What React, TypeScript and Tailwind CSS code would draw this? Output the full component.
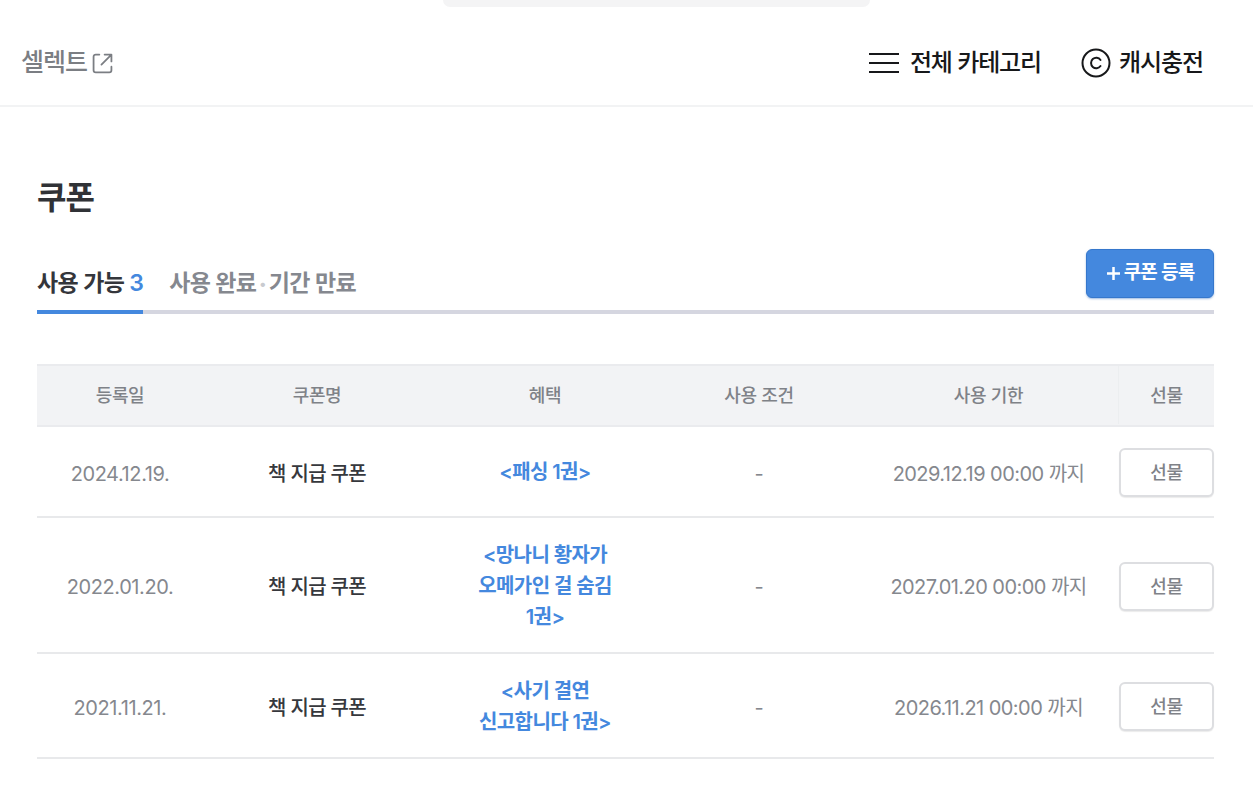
const rows = [
  { date: "2024.12.19.", title: ["<패싱 1권>"], until: "2029.12.19 00:00 까지", h: "h-[91px]" },
  { date: "2022.01.20.", title: ["<망나니 황자가", "오메가인 걸 숨김", "1권>"], until: "2027.01.20 00:00 까지", h: "h-[136px]" },
  { date: "2021.11.21.", title: ["<사기 결연", "신고합니다 1권>"], until: "2026.11.21 00:00 까지", h: "h-[105px]" },
];
const cols = "grid grid-cols-[166px_228px_228px_200px_259px_96px]";

export default function App() {
  return (
    <div className="min-h-[812px] bg-white font-['Inter','Noto_Sans_CJK_KR',sans-serif] overflow-hidden">
      <div className="flex h-[7px] pl-[443px]">
        <div className="w-[427px] h-[7px] bg-[#f4f4f5] rounded-b-[12px]" />
      </div>
      <header className="h-[100px] border-b-2 border-[#f2f3f4] flex items-center justify-between pl-[21px] pr-[50px] pt-[14px]">
        <div className="flex items-center gap-[5px] text-[#7b7e83]">
          <span className="text-[25px] font-medium tracking-[-1px]">셀렉트</span>
          <svg width="21" height="21" viewBox="0 0 20 20" fill="none" stroke="currentColor" strokeWidth="1.700" strokeLinecap="round" strokeLinejoin="round">
            <path d="M7 1.500H3.500a2 2 0 0 0-2 2v13a2 2 0 0 0 2 2h13a2 2 0 0 0 2-2V13" />
            <path d="M12 1.500h6.500V8M18.500 1.500 9 11" />
          </svg>
        </div>
        <div className="flex items-center text-[#17181a]">
          <svg width="30" height="22" viewBox="0 0 30 22" stroke="currentColor" strokeWidth="2.200" className="mr-[11px]">
            <path d="M0 2h30M0 11h30M0 20h30" />
          </svg>
          <span className="text-[24px] font-medium tracking-[-1.1px] mr-[40px]">전체 카테고리</span>
          <svg width="30" height="30" viewBox="0 0 30 30" fill="none" stroke="currentColor" className="mr-[8px]">
            <circle cx="15" cy="15" r="13.500" strokeWidth="2" />
            <path d="M19.500 12a5.200 5.200 0 1 0 0 6" strokeWidth="2" strokeLinecap="round" />
          </svg>
          <span className="text-[24px] font-medium tracking-[-1.1px]">캐시충전</span>
        </div>
      </header>

      <main className="pl-[37px] pr-[39px]">
        <h1 className="mt-[68px] text-[32px] leading-[46px] font-bold text-[#303236] tracking-[-0.9px]">쿠폰</h1>

        <div className="mt-[28px] flex items-end justify-between h-[65px] border-b-[4px] border-[#d5d6e0] relative">
          <div className="flex items-start gap-[26px] text-[23px] font-semibold tracking-[-0.65px] h-[65px] -mb-[4px]">
            <div className="h-[65px] border-b-[4px] border-[#4488de] flex items-center pt-[8px] whitespace-nowrap">
              <span className="text-[#34363b]">사용 가능</span>
              <span className="text-[#4488de] ml-[5px]">3</span>
            </div>
            <div className="h-[61px] flex items-center pt-[8px] text-[#85888f] whitespace-nowrap">
              <span>사용 완료</span>
              <span className="text-[#c9cbd0] text-[14px] mx-[3px]">•</span>
              <span>기간 만료</span>
            </div>
          </div>
          <button className="absolute right-0 top-0 w-[128px] h-[49px] rounded-[6px] bg-[#4488de] border border-[#3577cc] shadow-[0_1px_2px_rgba(60,120,200,0.5)] flex items-center justify-center gap-[3px] text-white text-[19px] font-semibold tracking-[-0.8px]">
            <svg width="15" height="15" viewBox="0 0 15 15" stroke="currentColor" strokeWidth="2.500">
              <path d="M7.500 1v13M1 7.500h13" />
            </svg>
            쿠폰 등록
          </button>
        </div>

        <div className="mt-[50px] w-[1177px]">
          <div className={`${cols} h-[63px] pb-[1px] bg-[#f2f3f5] border-y-2 border-[#eaebee] items-center text-center text-[18px] font-medium text-[#7f8288] tracking-[-0.35px]`}>
            <div>등록일</div>
            <div>쿠폰명</div>
            <div>혜택</div>
            <div>사용 조건</div>
            <div>사용 기한</div>
            <div className="h-full flex items-center justify-center border-l border-[#eceef0]">선물</div>
          </div>
          {rows.map((r) => (
            <div key={r.date} className={`${cols} ${r.h} pt-[2px] border-b-2 border-[#e8e9eb] items-center text-center`}>
              <div className="pt-[2px] text-[20px] text-[#85888e] tracking-[-0.4px]">{r.date}</div>
              <div className="pt-[2px] text-[20px] font-medium text-[#36383d] tracking-[-0.7px]">책 지급 쿠폰</div>
              <div className="text-[20px] leading-[31px] font-semibold text-[#4488de] tracking-[-0.6px]">
                {r.title.map((t) => (
                  <div key={t}>{t}</div>
                ))}
              </div>
              <div className="pt-[2px] text-[20px] text-[#85888e]">-</div>
              <div className="pt-[2px] text-[20px] text-[#85888e] tracking-[-0.55px] whitespace-nowrap">{r.until}</div>
              <div className="flex justify-end">
                <button className="w-[95px] h-[49px] rounded-[6px] bg-white border-2 border-[#dddee1] shadow-[0_1px_1px_rgba(0,0,0,0.08)] text-[18px] font-medium text-[#7f8288] tracking-[-0.35px]">
                  선물
                </button>
              </div>
            </div>
          ))}
        </div>
      </main>
    </div>
  );
}
